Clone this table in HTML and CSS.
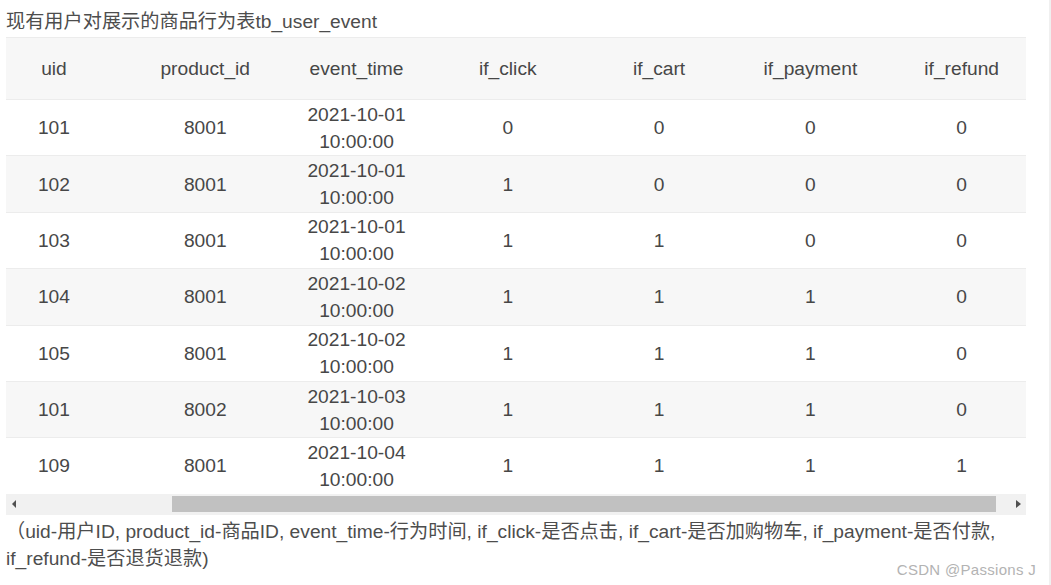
FILE: index.html
```html
<!DOCTYPE html>
<html lang="zh">
<head>
<meta charset="utf-8">
<link rel="stylesheet" href="styles.css">
</head>
<body>
<div class="page">
  <p class="title">现有用户对展示的商品行为表tb_user_event</p>
  <div class="table-box">
    <div class="viewport">
      <table class="data">
        <thead>
          <tr><th>uid</th><th>product_id</th><th>event_time</th><th>if_click</th><th>if_cart</th><th>if_payment</th><th>if_refund</th></tr>
        </thead>
        <tbody>
          <tr><td>101</td><td>8001</td><td>2021-10-01<br>10:00:00</td><td>0</td><td>0</td><td>0</td><td>0</td></tr>
          <tr><td>102</td><td>8001</td><td>2021-10-01<br>10:00:00</td><td>1</td><td>0</td><td>0</td><td>0</td></tr>
          <tr><td>103</td><td>8001</td><td>2021-10-01<br>10:00:00</td><td>1</td><td>1</td><td>0</td><td>0</td></tr>
          <tr><td>104</td><td>8001</td><td>2021-10-02<br>10:00:00</td><td>1</td><td>1</td><td>1</td><td>0</td></tr>
          <tr><td>105</td><td>8001</td><td>2021-10-02<br>10:00:00</td><td>1</td><td>1</td><td>1</td><td>0</td></tr>
          <tr><td>101</td><td>8002</td><td>2021-10-03<br>10:00:00</td><td>1</td><td>1</td><td>1</td><td>0</td></tr>
          <tr><td>109</td><td>8001</td><td>2021-10-04<br>10:00:00</td><td>1</td><td>1</td><td>1</td><td>1</td></tr>
        </tbody>
      </table>
    </div>
    <div class="hscroll">
      <div class="sb-btn"><span class="arrow-left"></span></div>
      <div class="sb-track">
        <div class="sb-gap-left"></div>
        <div class="sb-thumb"></div>
        <div class="sb-gap-right"></div>
      </div>
      <div class="sb-btn"><span class="arrow-right"></span></div>
    </div>
  </div>
  <p class="caption">（uid-用户ID, product_id-商品ID, event_time-行为时间, if_click-是否点击, if_cart-是否加购物车, if_payment-是否付款, if_refund-是否退货退款)</p>
</div>
<div class="watermark">CSDN @Passions J</div>
<div class="edge"></div>
</body>
</html>
```

FILE: styles.css
```css
html, body {
  margin: 0;
  padding: 0;
  background: #ffffff;
}

body {
  font-family: "Liberation Sans", Arial, "Noto Sans CJK SC", sans-serif;
  color: #4d4d4d;
  font-size: 19.2px;
  width: 1051px;
  height: 585px;
  overflow: hidden;
  position: relative;
}

.page {
  padding: 8px 0 0 6px;
  width: 1020px;
}

.title {
  margin: 0 0 2px 0;
  line-height: 27px;
  color: #4d4d4d;
  white-space: nowrap;
}

.table-box {
  width: 1020px;
}

.viewport {
  width: 1020px;
  overflow: hidden;
}

.data {
  border-collapse: collapse;
  table-layout: fixed;
  width: 1059px;
  margin-left: -27.7px;
}

.data th,
.data td {
  text-align: center;
  font-weight: normal;
  line-height: 27px;
  color: #474747;
  border-top: 1px solid #ececec;
}

.data th {
  padding: 17px 8px;
  background: #f7f7f7;
}

.data td {
  padding: 0.7px 8px;
}

.data tbody tr:nth-child(odd) td {
  background: #ffffff;
}

.data tbody tr:nth-child(even) td {
  background: #f7f7f7;
}

.hscroll {
  display: flex;
  height: 21px;
  background: #f1f1f1;
}

.sb-btn {
  width: 16px;
  flex: none;
  display: flex;
  align-items: center;
  justify-content: center;
}

.arrow-left {
  width: 0;
  height: 0;
  border-top: 4px solid transparent;
  border-bottom: 4px solid transparent;
  border-right: 4px solid #505050;
}

.arrow-right {
  width: 0;
  height: 0;
  border-top: 4.5px solid transparent;
  border-bottom: 4.5px solid transparent;
  border-left: 5px solid #505050;
}

.sb-track {
  flex: 1;
  display: flex;
  align-items: center;
}

.sb-gap-left {
  width: 150px;
  flex: none;
}

.sb-thumb {
  flex: 1;
  height: 16px;
  background: #c1c1c1;
}

.sb-gap-right {
  width: 14px;
  flex: none;
}

.caption {
  margin: 3px 0 0 0;
  line-height: 27px;
  color: #4d4d4d;
}

.watermark {
  position: absolute;
  right: 15px;
  bottom: 7px;
  font-size: 15px;
  line-height: 16px;
  color: #b3b3b3;
  font-family: "Liberation Sans", Arial, sans-serif;
  letter-spacing: 0.3px;
}

.edge {
  position: absolute;
  right: 0;
  top: 0;
  width: 2px;
  height: 585px;
  background: #f0f0f0;
}
```
